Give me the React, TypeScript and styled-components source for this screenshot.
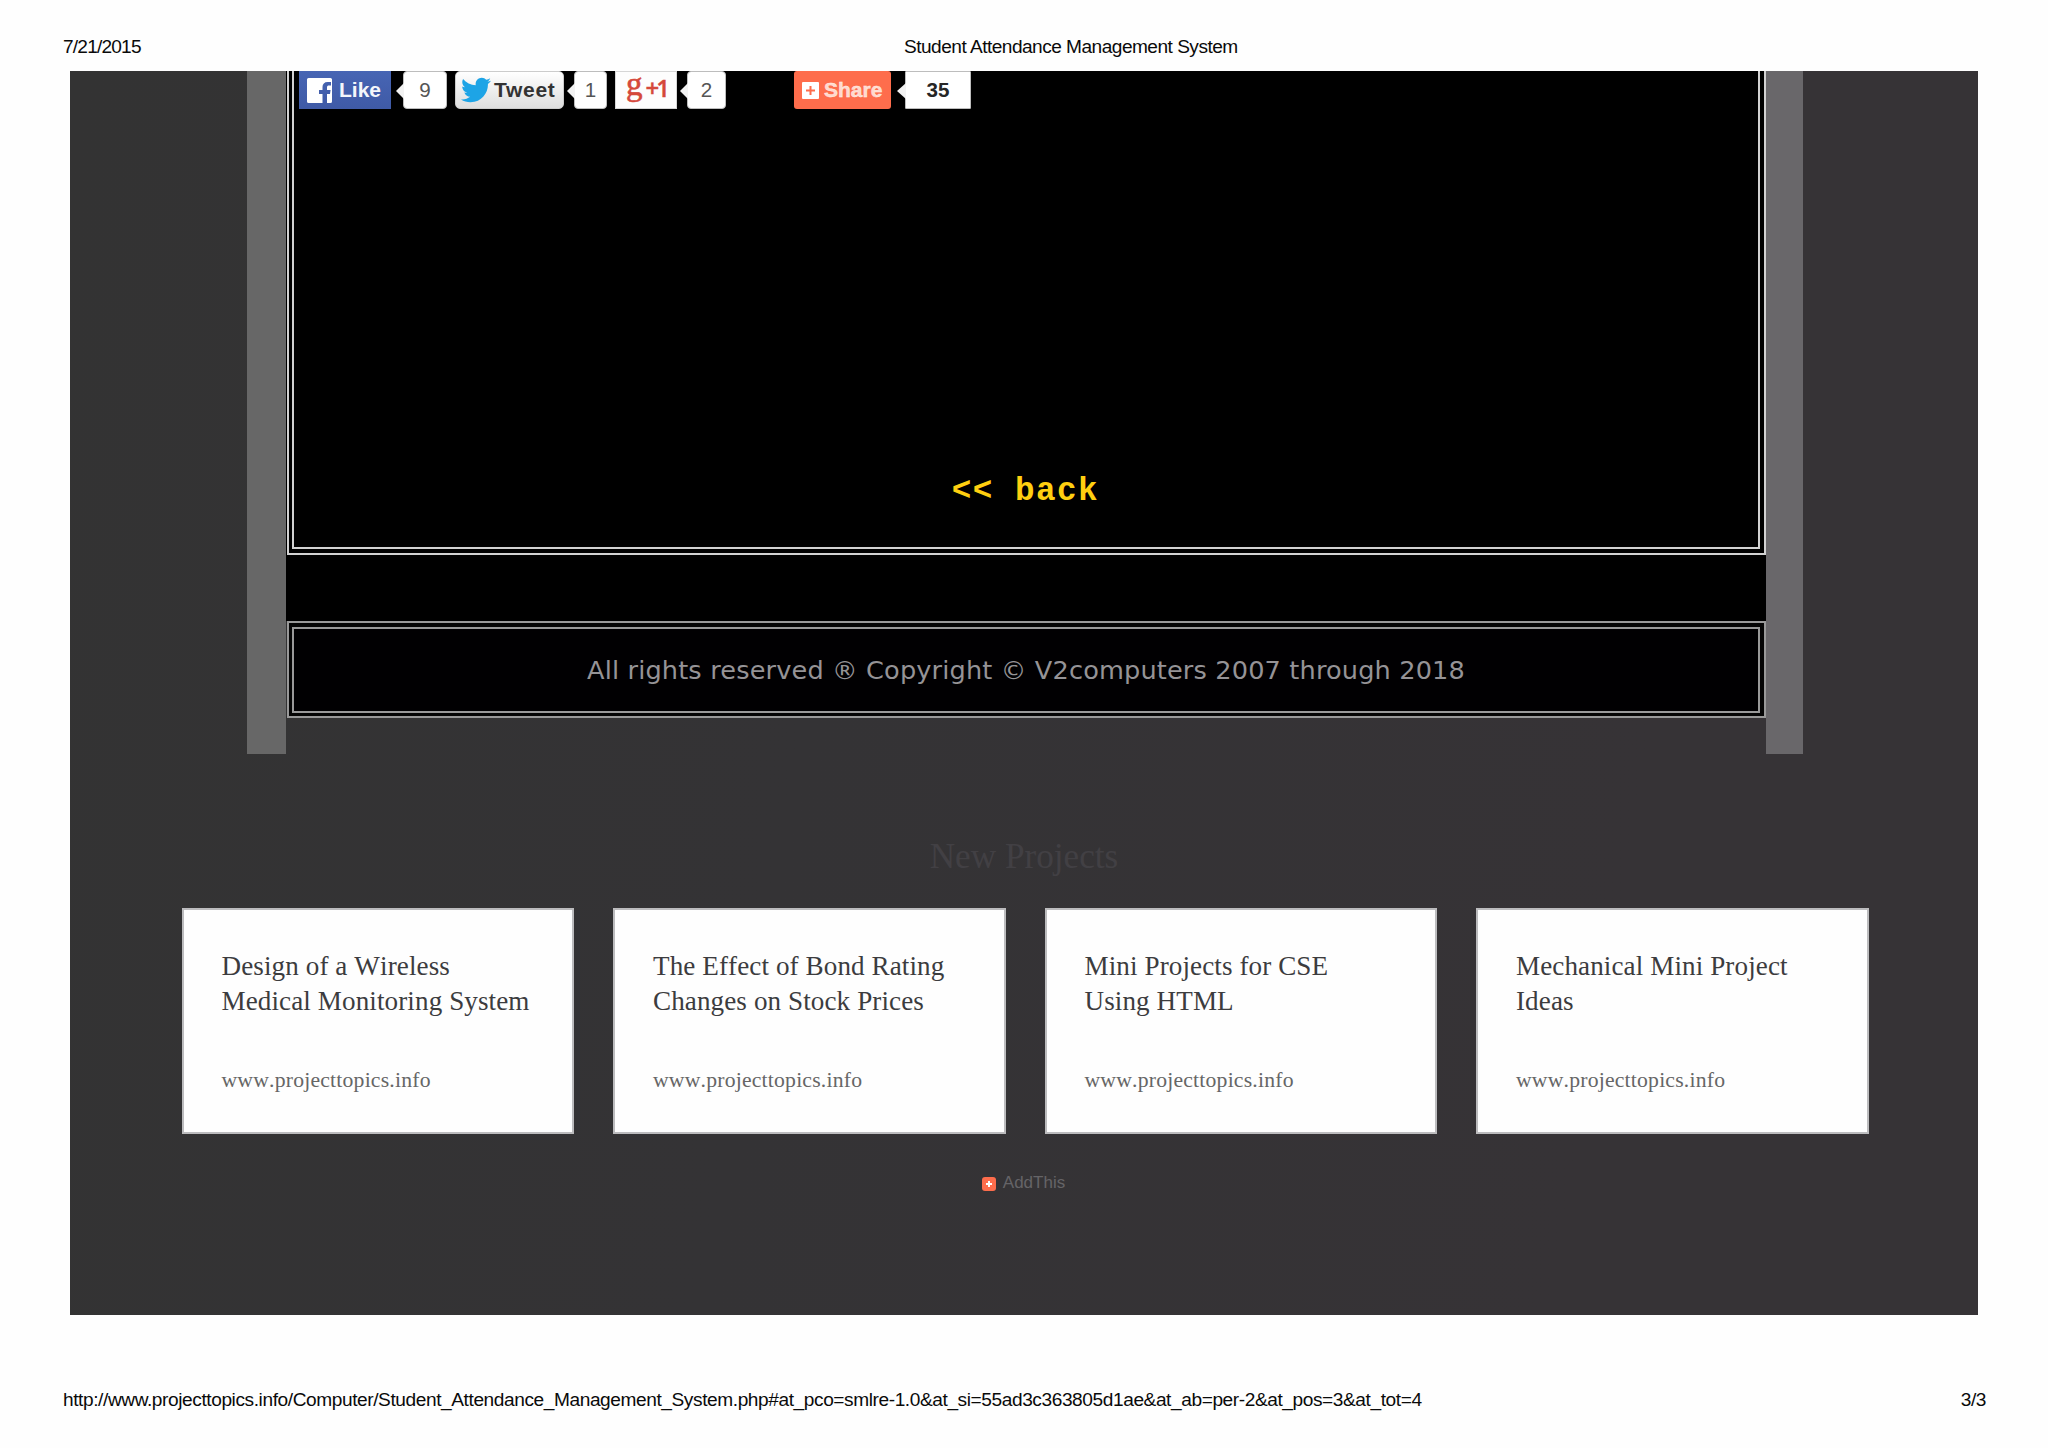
import React from "react";
import styled, { createGlobalStyle } from "styled-components";
import { FaTwitter } from "react-icons/fa";

const sans = '"Liberation Sans", Arial, sans-serif';
const serif = '"Liberation Serif", "Times New Roman", serif';

const GlobalStyle = createGlobalStyle`
  * { box-sizing: border-box; }
  html, body { margin: 0; padding: 0; background: #fefefe; }
`;

const Sheet = styled.div`
  width: 2048px;
  height: 1448px;
  display: flex;
  flex-direction: column;
  background: #fefefe;
  overflow: hidden;
`;

const PrintLine = styled.div<{ $top: number; $height: number; $columns: string; $spacing: number }>`
  flex: none;
  display: grid;
  grid-template-columns: ${(p) => p.$columns};
  height: ${(p) => p.$height}px;
  padding: ${(p) => p.$top}px 62px 0 63px;
  font: 19.1px/24px ${sans};
  letter-spacing: ${(p) => p.$spacing}px;
  color: #0a0a0a;
  white-space: nowrap;
`;

const PrintDate = styled.span`
  letter-spacing: -0.8px;
`;

const PageNumber = styled.span`
  text-align: right;
`;

const Page = styled.main`
  flex: none;
  display: flex;
  flex-direction: column;
  align-items: center;
  width: 1908px;
  height: 1244px;
  margin-left: 70px;
  background: linear-gradient(100deg, #333333 0%, #343335 40%, #363336 80%);
`;

const Frame = styled.div`
  display: flex;
  align-self: flex-start;
  width: 1556px;
  height: 683px;
  margin-left: 177px;
`;

const Rail = styled.div<{ $width: number; $color: string }>`
  flex: none;
  width: ${(p) => p.$width}px;
  background: ${(p) => p.$color};
`;

const Column = styled.div`
  flex: 1;
  display: flex;
  flex-direction: column;
`;

const ContentOuter = styled.section`
  height: 484px;
  margin-left: 1px;
  padding: 0 4px 4px 3px;
  border: 2px solid #d2d2d2;
  border-top: 0;
`;

const ContentInner = styled.div`
  display: flex;
  flex-direction: column;
  align-items: center;
  height: 100%;
  border: 2px solid #d2d2d2;
  border-top: 0;
  background: #000;
`;

const Black = styled.div`
  background: #000;
`;

const Spacer = styled.div`
  height: 66px;
`;

const Back = styled.a`
  margin-top: 363px;
  margin-right: 1px;
  font: bold 32.6px/40px "Liberation Mono", "Courier New", monospace;
  letter-spacing: 1.5px;
  color: #ffcf10;
  white-space: pre;
`;

const FooterOuter = styled.footer`
  height: 97px;
  margin-left: 1px;
  padding: 4px 4px 3px 3px;
  border: 2px solid #999;
  background: #050505;
`;

const FooterInner = styled.div`
  height: 100%;
  display: flex;
  align-items: center;
  justify-content: center;
  border: 2px solid #999;
  background: #010002;
  font: 25.6px/40px "DejaVu Sans", Verdana, sans-serif;
  letter-spacing: 0.15px;
  color: #959396;
  white-space: nowrap;
`;

const ShareRow = styled.div`
  align-self: stretch;
  display: flex;
  height: 38px;
  padding-left: 5px;
`;

const Button = styled.div<{ $width: number; $gap?: number }>`
  flex: none;
  display: flex;
  align-items: center;
  width: ${(p) => p.$width}px;
  height: 38px;
  margin-left: ${(p) => p.$gap ?? 0}px;
  font: bold 21px/24px ${sans};
  white-space: nowrap;
`;

const LikeButton = styled(Button)`
  padding-left: 8px;
  gap: 7px;
  color: #f4f6fb;
  background: linear-gradient(#4765b4, #3f5aa6);
`;

const TweetButton = styled(Button)`
  padding-left: 5px;
  gap: 3px;
  border: 1px solid #ccc;
  border-radius: 5px;
  color: #333;
  letter-spacing: 0.7px;
  background: linear-gradient(#fff, #dedede);
`;

const PlusButton = styled(Button)`
  padding-left: 10px;
  gap: 3px;
  border: 1px solid #d6d6d6;
  color: #d5483b;
  background: #fdfdfd;
`;

const SerifG = styled.span`
  margin-top: -13px;
  font: 33px/38px ${serif};
  -webkit-text-stroke: 0.6px #d5483b;
`;

const PlusOne = styled.span`
  margin-top: -4px;
  font: 600 24px/24px "Open Sans", sans-serif;
  letter-spacing: -3px;
  -webkit-text-stroke: 0.4px #d5483b;
`;

const ShareButton = styled(Button)`
  padding-left: 8px;
  gap: 5px;
  border-radius: 3px;
  color: #ffd9cd;
  background: #fe6d4c;
  -webkit-text-stroke: 0.4px #fff0ea;
`;

const Count = styled.div<{ $width: number; $gap: number; $bold?: boolean; $square?: boolean }>`
  position: relative;
  flex: none;
  width: ${(p) => p.$width}px;
  height: 38px;
  margin-left: ${(p) => p.$gap}px;
  border: 1px solid #bdbdbd;
  border-radius: ${(p) => (p.$square ? 1 : 4)}px;
  background: #fff;
  color: ${(p) => (p.$bold ? "#262626" : "#555")};
  font: ${(p) => (p.$bold ? "bold" : "normal")} 20.6px/35px ${sans};
  text-align: center;

  &::before {
    content: "";
    position: absolute;
    left: ${(p) => (p.$square ? -9 : -8)}px;
    top: 11px;
    border: solid transparent;
    border-width: 8px ${(p) => (p.$square ? 9 : 8)}px 8px 0;
    border-right-color: #f2f2f2;
  }
`;

const Heading = styled.h2`
  margin: 83px 0 0;
  font: 35.2px/40px ${serif};
  color: #424044;
`;

const Cards = styled.div`
  display: grid;
  grid-template-columns: repeat(4, 1fr);
  column-gap: 39px;
  width: 1687px;
  margin-top: 31px;
  margin-left: 2px;
`;

const Card = styled.article`
  display: flex;
  flex-direction: column;
  justify-content: space-between;
  height: 226px;
  padding: 39px 20px 37px 38px;
  border: 2px solid #bcbcbe;
  background: #fefefe;
  font-family: ${serif};
  font-kerning: none;
`;

const Title = styled.div`
  font-size: 27.1px;
  line-height: 35px;
  letter-spacing: 0.1px;
  color: #3c3c3e;
  white-space: nowrap;
`;

const Site = styled.div`
  font-size: 21.7px;
  line-height: 30px;
  letter-spacing: 0.2px;
  color: #666;
`;

const Credit = styled.div`
  display: flex;
  align-items: center;
  gap: 7px;
  margin-top: 37px;
  margin-right: 1px;
  font: 17px/24px ${sans};
  color: #656467;
`;

const CreditIcon = styled.svg`
  margin-top: 2px;
`;

const FacebookMark = () => (
  <svg width="25" height="25" viewBox="0 0 25 25">
    <path
      fill="#fff"
      d="M1.5 0h22A1.5 1.5 0 0 1 25 1.5v22a1.5 1.5 0 0 1-1.500 1.500H20v-9h3l.6-4H20V9.600c0-1.400.6-2 2-2h2V4h-3.300C17.300 4 15.500 6 15.500 9v3H12v4h3.500v9h-14A1.500 1.500 0 0 1 0 23.500v-22A1.500 1.500 0 0 1 1.500 0z"
    />
  </svg>
);

const AddMark = () => (
  <svg width="17" height="17" viewBox="0 0 17 17">
    <rect width="17" height="17" rx="1" fill="#fff" />
    <path d="M8.500 4v9M4 8.500h9" stroke="#fe6d4c" strokeWidth="2" />
  </svg>
);

const projects = [
  ["Design of a Wireless", "Medical Monitoring System"],
  ["The Effect of Bond Rating", "Changes on Stock Prices"],
  ["Mini Projects for CSE", "Using HTML"],
  ["Mechanical Mini Project", "Ideas"],
];

export default function App() {
  return (
    <Sheet>
      <GlobalStyle />
      <PrintLine $top={35} $height={71} $columns="841px 1fr" $spacing={-0.52}>
        <PrintDate>7/21/2015</PrintDate>
        <span>Student Attendance Management System</span>
      </PrintLine>
      <Page>
        <Frame>
          <Rail $width={39} $color="#676767" />
          <Column>
            <Black>
              <ContentOuter>
                <ContentInner>
                  <ShareRow>
                    <LikeButton $width={92}>
                      <FacebookMark />
                      Like
                    </LikeButton>
                    <Count $width={44} $gap={12}>9</Count>
                    <TweetButton $width={109} $gap={8}>
                      <FaTwitter size={30} color="#1da4e6" />
                      Tweet
                    </TweetButton>
                    <Count $width={33} $gap={10}>1</Count>
                    <PlusButton $width={62} $gap={8}>
                      <SerifG>g</SerifG>
                      <PlusOne>+1</PlusOne>
                    </PlusButton>
                    <Count $width={39} $gap={10}>2</Count>
                    <ShareButton $width={97} $gap={68}>
                      <AddMark />
                      Share
                    </ShareButton>
                    <Count $width={66} $gap={14} $bold $square>35</Count>
                  </ShareRow>
                  <Back>{"<< back"}</Back>
                </ContentInner>
              </ContentOuter>
              <Spacer />
            </Black>
            <FooterOuter>
              <FooterInner>All rights reserved ® Copyright © V2computers 2007 through 2018</FooterInner>
            </FooterOuter>
          </Column>
          <Rail $width={37} $color="#69676a" />
        </Frame>
        <Heading>New Projects</Heading>
        <Cards>
          {projects.map(([first, second]) => (
            <Card key={first}>
              <Title>
                {first}
                <br />
                {second}
              </Title>
              <Site>www.projecttopics.info</Site>
            </Card>
          ))}
        </Cards>
        <Credit>
          <CreditIcon width="14" height="14" viewBox="0 0 14 14">
            <rect width="14" height="14" rx="3" fill="#fe6d4c" />
            <path d="M7 4v6M4 7h6" stroke="#fff" strokeWidth="2" />
          </CreditIcon>
          AddThis
        </Credit>
      </Page>
      <PrintLine $top={73} $height={133} $columns="1fr auto" $spacing={-0.41}>
        <span>
          http://www.projecttopics.info/Computer/Student_Attendance_Management_System.php#at_pco=smlre-1.0&amp;at_si=55ad3c363805d1ae&amp;at_ab=per-2&amp;at_pos=3&amp;at_tot=4
        </span>
        <PageNumber>3/3</PageNumber>
      </PrintLine>
    </Sheet>
  );
}
